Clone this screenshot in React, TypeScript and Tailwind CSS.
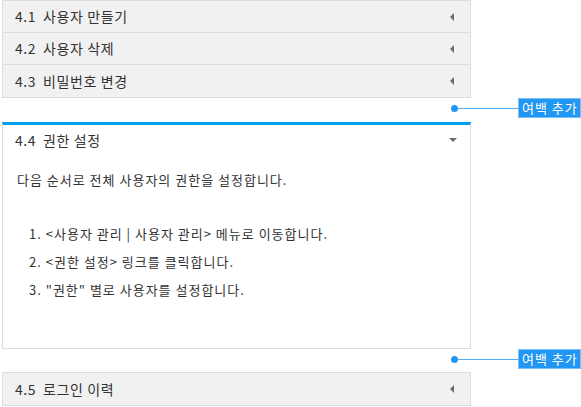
import React from "react";

const font = { fontFamily: '"Noto Sans CJK KR", "Noto Sans", sans-serif' };

function Arrow() {
  return (
    <svg width="5" height="8" viewBox="0 0 5 8" className="block">
      <polygon points="4,0 4,8 0,4" fill="#6b6b6b" />
    </svg>
  );
}

function Row({ num, title, last }: { num: string; title: string; last?: boolean }) {
  return (
    <div
      className={`flex h-[32px] items-center justify-between bg-[#f1f1f1] pl-[12px] pr-[15px] ${
        last ? "" : "border-b border-[#dcdcdc]"
      }`}
    >
      <div className="flex items-center text-[14px] text-[#333] tracking-[0.6px]">
        <span className="w-[28px]">{num}</span>
        <span>{title}</span>
      </div>
      <Arrow />
    </div>
  );
}

function Note({ h }: { h: string }) {
  return (
    <div className={`${h} flex items-start`}>
      <div className="flex h-[20px] items-center pl-[451px]">
        <div className="h-[7px] w-[7px] rounded-full bg-[#2196f3]" />
        <div className="h-[1px] w-[60px] bg-[#56acf5]" />
        <div className="flex h-[20px] w-[63px] items-center border border-[#7cc0f8] bg-[#2196f3] pl-[3px] text-[13px] tracking-[1px] text-white">
          여백 추가
        </div>
      </div>
    </div>
  );
}

export default function App() {
  return (
    <div className="w-[581px] h-[407px] bg-white overflow-hidden" style={font}>
      <div className="ml-[2px] w-[469px] border border-[#dcdcdc]">
        <Row num="4.1" title="사용자 만들기" />
        <Row num="4.2" title="사용자 삭제" />
        <Row num="4.3" title="비밀번호 변경" last />
      </div>
      <Note h="h-[24px]" />
      <div className="ml-[2px] w-[469px] h-[227px] border-x border-b border-[#dcdcdc] border-t-[3px] border-t-[#00a0f0]">
        <div className="flex h-[31px] items-center justify-between pl-[12px] pr-[13px] text-[14px] tracking-[0.6px] text-[#333]">
          <div className="flex items-center">
            <span className="w-[28px]">4.4</span>
            <span>권한 설정</span>
          </div>
          <svg width="8" height="5" viewBox="0 0 8 5" className="block">
            <polygon points="0,0 8,0 4,4" fill="#6b6b6b" />
          </svg>
        </div>
        <div className="pl-[14px] pt-[14px] text-[13px] tracking-[1px] text-[#333]">
          <p className="h-[20px] leading-[20px]">다음 순서로 전체 사용자의 권한을 설정합니다.</p>
          <ol className="mt-[34px] pl-[12px]">
            <li className="h-[28px] leading-[20px]">1. &lt;사용자 관리 | 사용자 관리&gt; 메뉴로 이동합니다.</li>
            <li className="h-[28px] leading-[20px]">2. &lt;권한 설정&gt; 링크를 클릭합니다.</li>
            <li className="h-[28px] leading-[20px]">3. "권한" 별로 사용자를 설정합니다.</li>
          </ol>
        </div>
      </div>
      <Note h="h-[23px]" />
      <div className="ml-[2px] w-[469px] border border-[#dcdcdc]">
        <Row num="4.5" title="로그인 이력" last />
      </div>
    </div>
  );
}
